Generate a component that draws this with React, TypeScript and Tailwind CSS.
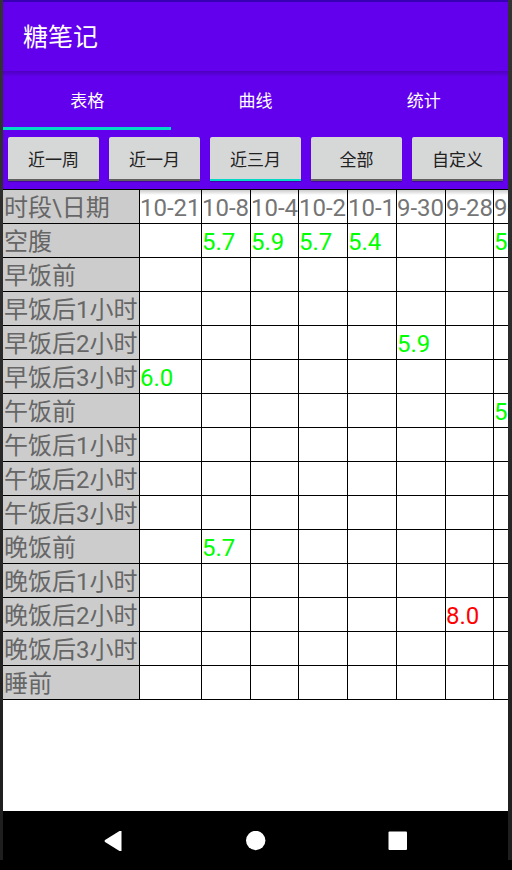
import { useState } from "react";

const tabs = ["表格", "曲线", "统计"];
const ranges = ["近一周", "近一月", "近三月", "全部", "自定义"];

const dates = ["10-21", "10-8", "10-4", "10-2", "10-1", "9-30", "9-28", "9-27"];

const rows: { label: string; values: Record<number, string> }[] = [
  { label: "空腹", values: { 1: "5.7", 2: "5.9", 3: "5.7", 4: "5.4", 7: "5.6" } },
  { label: "早饭前", values: {} },
  { label: "早饭后1小时", values: {} },
  { label: "早饭后2小时", values: { 5: "5.9" } },
  { label: "早饭后3小时", values: { 0: "6.0" } },
  { label: "午饭前", values: { 7: "5.8" } },
  { label: "午饭后1小时", values: {} },
  { label: "午饭后2小时", values: {} },
  { label: "午饭后3小时", values: {} },
  { label: "晚饭前", values: { 1: "5.7" } },
  { label: "晚饭后1小时", values: {} },
  { label: "晚饭后2小时", values: { 6: "8.0" } },
  { label: "晚饭后3小时", values: {} },
  { label: "睡前", values: {} },
];

const HIGH = 7.8;

const cell = "h-[34px] border-r border-b border-black p-0 pt-[3px] font-normal whitespace-nowrap";
const labelCell = "h-[34px] border-r border-b border-black bg-[#cccccc] p-0 pt-[3px] pl-px font-normal whitespace-nowrap text-[#666666]";

function RecordTable() {
  return (
    <div className="overflow-hidden">
      <table className="w-[530px] table-fixed border-separate border-spacing-0 border-t border-black text-left text-[24px] leading-[30px]">
        <colgroup>
          <col className="w-[137px]" />
          <col className="w-[62px]" />
          <col className="w-[49px]" />
          <col className="w-[48px]" />
          <col className="w-[49px]" />
          <col className="w-[49px]" />
          <col className="w-[49px]" />
          <col className="w-[48px]" />
          <col />
        </colgroup>
        <thead>
          <tr className="bg-linear-to-b from-black/20 to-transparent to-15% text-[#757575]">
            <th scope="col" className={labelCell}>
              时段\日期
            </th>
            {dates.map((d) => (
              <th key={d} scope="col" className={cell}>
                {d}
              </th>
            ))}
          </tr>
        </thead>
        <tbody>
          {rows.map((row) => (
            <tr key={row.label}>
              <th scope="row" className={labelCell}>
                {row.label}
              </th>
              {dates.map((d, i) => {
                const v = row.values[i];
                const color = v && Number(v) > HIGH ? "text-[#ff0000]" : "text-[#00ff00]";
                return (
                  <td key={d} className={`${cell} ${color}`}>
                    {v}
                  </td>
                );
              })}
            </tr>
          ))}
        </tbody>
      </table>
    </div>
  );
}

export default function App() {
  const [tab, setTab] = useState(0);
  const [range, setRange] = useState(2);

  return (
    <div className="flex min-h-screen flex-col bg-black pb-[10px] font-[Roboto,'Noto_Sans_CJK_SC',sans-serif]">
      <div className="flex flex-1 flex-col bg-linear-to-b from-[#333333] to-[#1e1e1e] pr-1 pl-[3px]">
        <div className="h-[2px] bg-[#3700b3]" />
        <header className="flex h-[69px] items-center bg-[#6200ee] px-5 pt-[3px]">
          <h1 className="text-[25px] leading-8 text-white">糖笔记</h1>
        </header>

        <div className="bg-[#6200ee] bg-linear-to-b from-black/20 to-transparent to-5%">
          <div role="tablist" className="grid h-[59px] grid-cols-3">
            {tabs.map((t, i) => (
              <button
                key={t}
                role="tab"
                aria-selected={tab === i}
                onClick={() => setTab(i)}
                className={`border-b-3 pt-[3px] text-[17px] leading-6 text-white ${tab === i ? "border-[#03dac5]" : "border-transparent"}`}
              >
                {t}
              </button>
            ))}
          </div>
          <div className="grid grid-cols-5 gap-[10px] px-[5px] pt-[7px] pb-2">
            {ranges.map((r, i) => (
              <button
                key={r}
                aria-pressed={range === i}
                onClick={() => setRange(i)}
                className={`h-11 rounded-t-xs border-b-2 bg-[#d6d7d7] pt-[3px] text-[17px] leading-6 text-[#212121] shadow-[0_1px_1px_rgba(0,0,0,0.3)] ${range === i ? "border-[#03dac5]" : "border-[#616161]"}`}
              >
                {r}
              </button>
            ))}
          </div>
        </div>

        <main className="flex-1 bg-white">
          <RecordTable />
        </main>

        <nav className="flex h-[49px] justify-center bg-black pt-5">
          <div className="grid grid-cols-[142px_142px_142px] justify-items-center">
            <button aria-label="返回" className="h-5 w-5">
              <svg viewBox="0 0 20 20" className="h-5 w-5" fill="#fff">
                <path d="M15.500 0H17.500v20H15.500L1 11Q0 10 1 9Z" />
              </svg>
            </button>
            <button aria-label="主屏幕" className="h-5 w-5">
              <svg viewBox="0 0 20 20" className="h-5 w-5" fill="#fff">
                <circle cx="9.700" cy="9.500" r="9.700" />
              </svg>
            </button>
            <button aria-label="最近任务" className="h-5 w-5">
              <svg viewBox="0 0 20 20" className="h-5 w-5" fill="#fff">
                <rect x="0.500" y="0.500" width="18.500" height="18.500" rx="1" />
              </svg>
            </button>
          </div>
        </nav>
      </div>
    </div>
  );
}
